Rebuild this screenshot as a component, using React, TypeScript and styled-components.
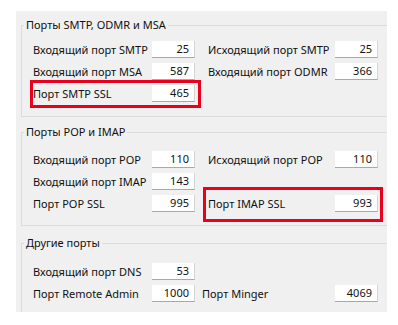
import styled, { createGlobalStyle } from "styled-components";

const GlobalStyle = createGlobalStyle`
  html, body {
    margin: 0;
    padding: 0;
    background: #fff;
  }
  body {
    font-family: "Noto Sans", "Segoe UI", sans-serif;
    font-size: 11px;
    color: #111;
  }
`;

type Field = { label: string; value: string; mark?: boolean; shift?: number };
type Row = [Field, Field?];
type Group = { title: string; top: number; bottom: number; gap: number; rows: Row[] };

const groups: Group[] = [
  {
    title: "Порты SMTP, ODMR и MSA",
    top: 8,
    bottom: 14,
    gap: 0,
    rows: [
      [{ label: "Входящий порт SMTP", value: "25" }, { label: "Исходящий порт SMTP", value: "25" }],
      [{ label: "Входящий порт MSA", value: "587" }, { label: "Входящий порт ODMR", value: "366" }],
      [{ label: "Порт SMTP SSL", value: "465", mark: true }],
    ],
  },
  {
    title: "Порты POP и IMAP",
    top: 11,
    bottom: 13,
    gap: 7,
    rows: [
      [{ label: "Входящий порт POP", value: "110" }, { label: "Исходящий порт POP", value: "110" }],
      [{ label: "Входящий порт IMAP", value: "143" }],
      [{ label: "Порт POP SSL", value: "995" }, { label: "Порт IMAP SSL", value: "993", mark: true }],
    ],
  },
  {
    title: "Другие порты",
    top: 12,
    bottom: 14,
    gap: 9,
    rows: [
      [{ label: "Входящий порт DNS", value: "53" }],
      [{ label: "Порт Remote Admin", value: "1000" }, { label: "Порт Minger", value: "4069", shift: -6 }],
    ],
  },
];

export default function App() {
  return (
    <>
      <GlobalStyle />
      <Panel>
        {groups.map((g) => (
          <GroupBox key={g.title} $top={g.top} $bottom={g.bottom} $gap={g.gap}>
            <Legend>{g.title}</Legend>
            <Rows>
              {g.rows.map((row, i) => (
                <RowLine key={i}>
                  <PortField field={row[0]} />
                  {row[1] ? <PortField field={row[1]} right /> : <span />}
                </RowLine>
              ))}
            </Rows>
          </GroupBox>
        ))}
      </Panel>
    </>
  );
}

function PortField({ field, right }: { field: Field; right?: boolean }) {
  return (
    <Pair $shift={field.shift ?? 0}>
      <Label>{field.label}</Label>
      <PortInput>{field.value}</PortInput>
      {field.mark && <Highlight $right={right} />}
    </Pair>
  );
}

const Panel = styled.div`
  width: 371px;
  height: 301px;
  margin: 11px 0 0 16px;
  padding: 6px 0 0 5px;
  box-sizing: border-box;
  background: #f0f0f0;
  overflow: hidden;
`;

const GroupBox = styled.fieldset<{ $top: number; $bottom: number; $gap: number }>`
  margin: ${(p) => p.$gap}px 0 0 0;
  width: 420px;
  box-sizing: border-box;
  border: 1px solid #dcdcdc;
  padding: ${(p) => p.$top}px 0 ${(p) => p.$bottom}px 11px;
  min-width: 0;
`;

const Legend = styled.legend`
  margin-left: -9px;
  padding: 0 2px;
  line-height: 16px;
  font-size: 11px;
`;

const Rows = styled.div`
  display: flex;
  flex-direction: column;
  gap: 5px;
`;

const RowLine = styled.div`
  display: grid;
  grid-template-columns: 162px 170px;
  column-gap: 13px;
`;

const Pair = styled.div<{ $shift: number }>`
  position: relative;
  display: grid;
  grid-template-columns: 1fr 43px;
  align-items: center;
  margin-left: ${(p) => p.$shift}px;
`;

const Label = styled.span`
  white-space: nowrap;
  line-height: 17px;
`;

const PortInput = styled.div`
  height: 17px;
  box-sizing: border-box;
  background: #fff;
  border-bottom: 1px solid #a8a8a8;
  border-right: 1px solid #d4d4d4;
  padding-right: 5px;
  text-align: right;
  line-height: 16px;
`;

const Highlight = styled.div<{ $right?: boolean }>`
  position: absolute;
  border: 3px solid #e8001c;
  pointer-events: none;
  ${(p) =>
    p.$right
      ? "left: -5px; right: -5px; top: -8px; bottom: -10px;"
      : "left: -3px; right: -6px; top: -5px; bottom: -6px;"}
`;
